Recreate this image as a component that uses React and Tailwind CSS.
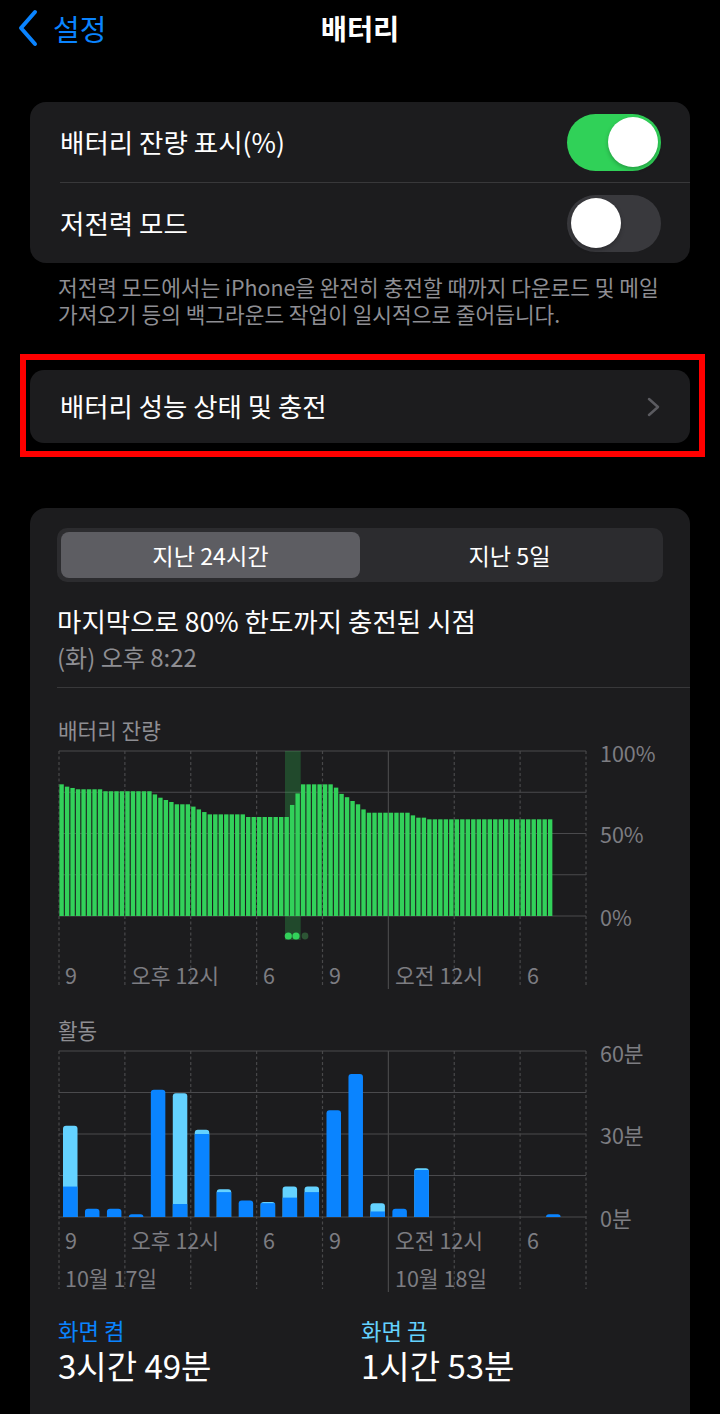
import React from 'react'

const fill = (v, n) => Array(n).fill(v)

// 15분 단위 배터리 잔량 (%)
const battery = [
	79.8, 78.4, 77.6, ...fill(76.8, 5), ...fill(75.6, 9), 73.7, 71.7, 70.3, 69.1, ...fill(67.7, 3), 66.3, 64.6, 63,
	...fill(61.6, 7), ...fill(60, 8), 67.3, 74.3, ...fill(79.8, 6), 77.8, 74, 72, 69.7, 67.7, 64.6, ...fill(62.6, 8), 61,
	59.6, 59.6, ...fill(58.6, 23),
]

// 시간별 활동 [화면 켬, 화면 끔] (분)
const activity = [
	[11, 22], [3, 0], [3, 0], [1, 0], [46, 0], [4.7, 40], [30, 1.5], [9, 1], [6, 0], [5, 0.4], [7, 4], [9, 2],
	[38.6, 0], [51.7, 0], [2, 3], [3, 0], [17, 0.6], [0, 0], [0, 0], [0, 0], [0, 0], [0, 0], [1, 0], [0, 0],
]

const X0 = 29
const X1 = 556
const STEP = (X1 - X0) / 8
const gridXs = Array.from({ length: 9 }, (_, k) => X0 + k * STEP)
const LINE = '#48484a'
const LABEL = '#7d7d82'
const AXIS = 21.5

const hourLabels = [
	{ x: 35, t: '9' },
	{ x: 101, t: '오후 12시' },
	{ x: 233, t: '6' },
	{ x: 299, t: '9' },
	{ x: 365, t: '오전 12시' },
	{ x: 497, t: '6' },
]

const roundTop = (x, y, w, h, r) => {
	const rr = Math.min(r, h, w / 2)
	const b = y + h
	return `M${x},${b} V${y + rr} Q${x},${y} ${x + rr},${y} H${x + w - rr} Q${x + w},${y} ${x + w},${y + rr} V${b} Z`
}

function GridLines({ top, bottom, end }) {
	const step = (bottom - top) / 4
	return (
		<>
			{[0, 1, 2, 3, 4].map(k => (
				<line key={'h' + k} x1={X0} x2={X1} y1={top + k * step} y2={top + k * step} stroke="#4a4a4d" strokeWidth="1" />
			))}
			{gridXs.map((x, k) =>
				k === 5 ? (
					<line key={'v' + k} x1={x} x2={x} y1={top} y2={end + 3} stroke={LINE} strokeWidth="1.2" />
				) : (
					<line key={'v' + k} x1={x} x2={x} y1={top} y2={end} stroke={LINE} strokeWidth="1.2" strokeDasharray="3 2.5" />
				)
			)}
		</>
	)
}

function BatteryChart() {
	const top = 7
	const bottom = 172
	const slot = (X1 - X0) / 96
	return (
		<svg width="660" height="250" className="block overflow-visible">
			<GridLines top={top} bottom={bottom} end={242} />
			<rect x="255" y={top} width="15.7" height="189" fill="#30d158" opacity="0.25" />
			{battery.map((v, i) => {
				const h = (v / 100) * (bottom - top)
				return <rect key={i} x={X0 + i * slot + 0.4} y={bottom - h} width={slot - 1.1} height={h} fill="#32d15a" />
			})}
			<circle cx="258.3" cy="192" r="3.6" fill="#32d15a" />
			<circle cx="266" cy="192" r="3.6" fill="#32d15a" />
			<circle cx="275" cy="192" r="3.4" fill="#2d5535" />
			<text x="570" y={top + 1} dominantBaseline="central" fontSize={AXIS} fill={LABEL}>100%</text>
			<text x="570" y={(top + bottom) / 2} dominantBaseline="central" fontSize={AXIS} fill={LABEL}>50%</text>
			<text x="570" y={bottom} dominantBaseline="central" fontSize={AXIS} fill={LABEL}>0%</text>
			{hourLabels.map(l => (
				<text key={l.x} x={l.x} y="230" dominantBaseline="central" fontSize={AXIS} fill={LABEL}>
					{l.t}
				</text>
			))}
		</svg>
	)
}

function ActivityChart() {
	const top = 7
	const bottom = 173
	const perMin = (bottom - top) / 60
	const slot = (X1 - X0) / 24
	return (
		<svg width="660" height="250" className="block overflow-visible">
			<GridLines top={top} bottom={bottom} end={245} />
			{activity.map(([on, off], i) => {
				const x = X0 + i * slot + 4
				const w = 14.5
				const total = (on + off) * perMin
				const onH = on * perMin
				if (total <= 0) return null
				return (
					<g key={i}>
						{off > 0 && <path d={roundTop(x, bottom - total, w, total, 3)} fill="#64d2ff" />}
						{on > 0 &&
							(off > 0 ? (
								<rect x={x} y={bottom - onH} width={w} height={onH} fill="#0a84ff" />
							) : (
								<path d={roundTop(x, bottom - onH, w, onH, 3)} fill="#0a84ff" />
							))}
					</g>
				)
			})}
			<text x="570" y={top + 1} dominantBaseline="central" fontSize={AXIS} fill={LABEL}>60분</text>
			<text x="570" y={(top + bottom) / 2} dominantBaseline="central" fontSize={AXIS} fill={LABEL}>30분</text>
			<text x="570" y={bottom} dominantBaseline="central" fontSize={AXIS} fill={LABEL}>0분</text>
			{hourLabels.map(l => (
				<text key={l.x} x={l.x} y="195" dominantBaseline="central" fontSize={AXIS} fill={LABEL}>
					{l.t}
				</text>
			))}
			<text x="35" y="233" dominantBaseline="central" fontSize={AXIS} fill={LABEL}>10월 17일</text>
			<text x="365" y="233" dominantBaseline="central" fontSize={AXIS} fill={LABEL}>10월 18일</text>
		</svg>
	)
}

function Toggle({ on }) {
	return (
		<div className={on ? 'flex h-[57px] w-[94px] justify-end rounded-full bg-[#30d158] p-[3.5px]' : 'flex h-[57px] w-[94px] justify-start rounded-full bg-[#39393d] p-[3.5px]'}>
			<div className="h-[50px] w-[50px] rounded-full bg-white shadow-[0_2px_4px_rgba(0,0,0,0.25)]" />
		</div>
	)
}

export default function App() {
	return (
		<div className="min-h-[1414px] bg-black font-['Noto_Sans_CJK_KR',sans-serif] text-white">
			{/* Header */}
			<div className="grid h-[56px] grid-cols-[1fr_auto_1fr] items-center">
				<div className="flex items-center pl-[16px]">
					<svg width="24" height="38" viewBox="0 0 24 38">
						<polyline points="19,3 5,19 19,35" fill="none" stroke="#0a84ff" strokeWidth="4" strokeLinecap="round" strokeLinejoin="round" />
					</svg>
					<span className="ml-[13px] text-[29px] leading-none text-[#0a84ff]">설정</span>
				</div>
				<div className="text-[28.5px] font-bold leading-none">배터리</div>
				<div />
			</div>

			{/* Toggles */}
			<div className="mx-[30px] mt-[46px] rounded-[16px] bg-[#1c1c1e]">
				<div className="flex h-[80px] items-center justify-between pl-[30px] pr-[29px]">
					<span className="text-[26.5px] leading-none">배터리 잔량 표시(%)</span>
					<Toggle on />
				</div>
				<div className="ml-[30px] h-px bg-[#38383a]" />
				<div className="flex h-[80px] items-center justify-between pl-[30px] pr-[29px]">
					<span className="text-[26.5px] leading-none">저전력 모드</span>
					<Toggle />
				</div>
			</div>
			<p className="whitespace-nowrap px-[58px] pt-[10px] text-[21.4px] leading-[27px] text-[#8e8e93]">
				저전력 모드에서는 iPhone을 완전히 충전할 때까지 다운로드 및 메일
				<br />
				가져오기 등의 백그라운드 작업이 일시적으로 줄어듭니다.
			</p>

			{/* Highlighted row */}
			<div className="ml-[20px] mt-[27px] w-[685px] border-[6px] border-[#ff0000] pb-[8px] pl-[4px] pr-[9px] pt-[10px]">
				<div className="flex h-[73px] items-center justify-between rounded-[14px] bg-[#1c1c1e] pl-[30px] pr-[30px]">
					<span className="text-[26.4px] leading-none">배터리 성능 상태 및 충전</span>
					<svg width="13" height="20" viewBox="0 0 13 20">
						<polyline points="2,2 11,10 2,18" fill="none" stroke="#5b5b60" strokeWidth="2.5" strokeLinecap="round" strokeLinejoin="round" />
					</svg>
				</div>
			</div>

			{/* Usage card */}
			<div className="mx-[30px] mt-[51px] rounded-[16px] bg-[#1c1c1e] pb-[60px] pt-[20px]">
				<div className="mx-[27px] flex h-[54px] rounded-[10px] bg-[#2c2c2f] p-[4px]">
					<div className="flex flex-1 items-center justify-center rounded-[8px] bg-[#5d5d62] text-[23.2px]">지난 24시간</div>
					<div className="flex flex-1 items-center justify-center text-[23.2px]">지난 5일</div>
				</div>
				<div className="mt-[21px] whitespace-nowrap px-[27px] text-[26.5px] leading-[36px]">마지막으로 80% 한도까지 충전된 시점</div>
				<div className="mt-[3px] px-[27px] text-[24px] leading-[30px] text-[#8e8e93]">(화) 오후 8:22</div>
				<div className="ml-[27px] mt-[15px] h-px bg-[#38383a]" />

				<div className="mt-[28px] px-[28px] text-[21.3px] leading-[28px] text-[#8e8e93]">배터리 잔량</div>
				<div>
					<BatteryChart />
				</div>

				<div className="mt-[22px] px-[28px] text-[21.3px] leading-[28px] text-[#8e8e93]">활동</div>
				<div>
					<ActivityChart />
				</div>

				<div className="mt-[22px] flex pl-[28px]">
					<div className="w-[303px]">
						<div className="text-[22.3px] leading-[28px] text-[#0a84ff]">화면 켬</div>
						<div className="mt-px text-[33px] leading-[40px]">3시간 49분</div>
					</div>
					<div>
						<div className="text-[22.3px] leading-[28px] text-[#64d2ff]">화면 끔</div>
						<div className="mt-px text-[33px] leading-[40px]">1시간 53분</div>
					</div>
				</div>
			</div>
		</div>
	)
}
